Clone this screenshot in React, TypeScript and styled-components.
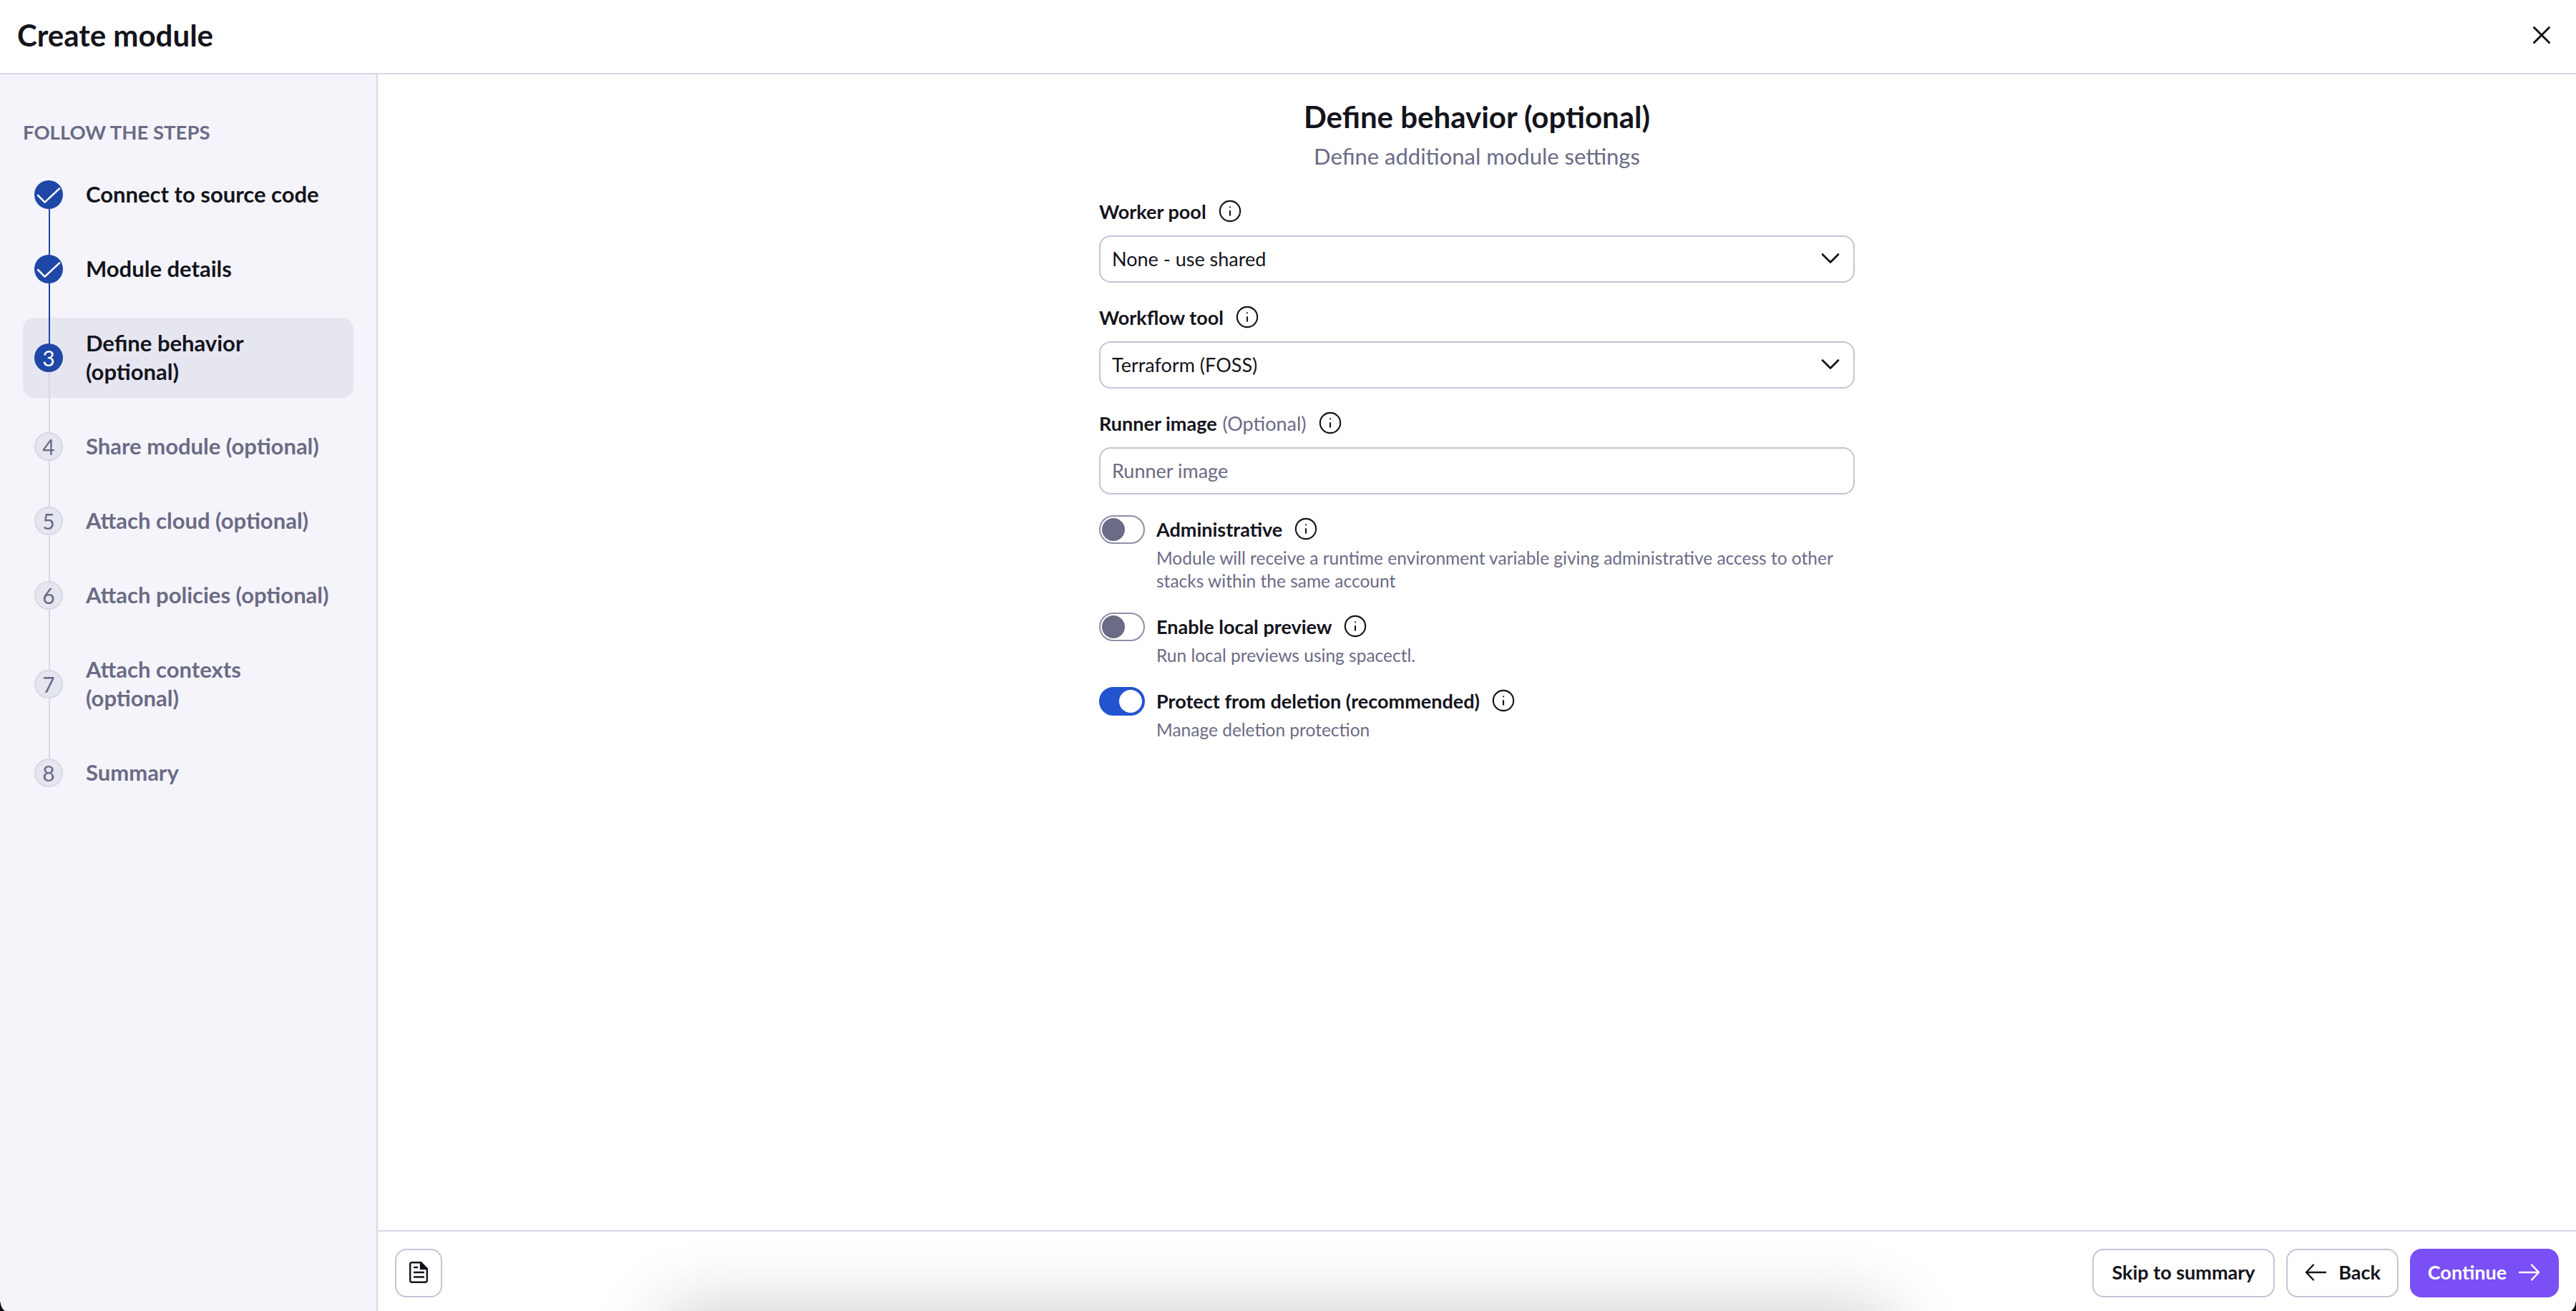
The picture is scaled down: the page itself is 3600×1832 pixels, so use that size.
import { createGlobalStyle, styled } from 'styled-components';
import { Info, ChevronDown, X } from 'lucide-react';

const GlobalStyle = createGlobalStyle`
  html, body {
    margin: 0;
    padding: 0;
    background: #0c0c0c;
    font-family: "Lato", "Noto Sans", sans-serif;
    color: #14141c;
  }
  * { box-sizing: border-box; }
`;

const Window = styled.div`
  position: relative;
  width: 3600px;
  height: 1832px;
  display: flex;
  flex-direction: column;
  background: #fff;
  border-radius: 0 0 9px 9px / 0 0 19px 19px;
  overflow: hidden;
`;

const Header = styled.header`
  height: 104px;
  flex: none;
  display: flex;
  align-items: center;
  justify-content: space-between;
  padding: 0 27px 4px 24px;
  border-bottom: 2px solid #d8d8e6;
`;

const PageTitle = styled.h1`
  margin: 0;
  font-size: 42px;
  line-height: 48px;
  font-weight: 700;
`;

const Body = styled.div`
  flex: 1;
  display: flex;
  min-height: 0;
`;

const Sidebar = styled.aside`
  width: 528px;
  flex: none;
  padding: 63px 32px 0;
  background: #f4f4fa;
  border-right: 2px solid #d8d8e6;
`;

const SidebarTitle = styled.div`
  font-size: 27.5px;
  line-height: 36px;
  font-weight: 700;
  color: #6b6b85;
  margin-bottom: 33px;
`;

const Steps = styled.div`
  display: flex;
  flex-direction: column;
  gap: 32px;
`;

const Step = styled.div<{ $active?: boolean; $line?: string }>`
  position: relative;
  display: flex;
  align-items: center;
  gap: 32px;
  min-height: 72px;
  padding: 16px 0 16px 16px;
  border-radius: 16px;
  background: ${(p) => (p.$active ? '#e6e6f0' : 'transparent')};

  &::after {
    content: ${(p) => (p.$line ? "''" : 'none')};
    position: absolute;
    z-index: 1;
    left: 36px;
    top: calc(50% + 20px);
    height: 90px;
    width: 2px;
    background: ${(p) => p.$line};
  }
`;

const Bullet = styled.div<{ $on: boolean }>`
  position: relative;
  z-index: 2;
  width: 40px;
  height: 40px;
  flex: none;
  display: flex;
  align-items: center;
  justify-content: center;
  border-radius: 50%;
  font-size: 30px;
  background: ${(p) => (p.$on ? '#1e47a8' : '#e6e6f0')};
  border: ${(p) => (p.$on ? 'none' : '2px solid #d8d8e6')};
  color: ${(p) => (p.$on ? '#fff' : '#6b6b85')};
`;

const StepLabel = styled.div<{ $on: boolean }>`
  max-width: 346px;
  margin: -1px 0 1px;
  font-size: 31px;
  line-height: 40px;
  font-weight: 700;
  color: ${(p) => (p.$on ? '#14141c' : '#6b6b85')};
`;

const Main = styled.main`
  flex: 1;
  display: flex;
  flex-direction: column;
  min-width: 0;
`;

const Content = styled.div`
  flex: 1;
  padding-top: 35px;
  display: flex;
  flex-direction: column;
  align-items: center;
`;

const Heading = styled.h2`
  margin: 0;
  font-size: 42px;
  line-height: 48px;
  font-weight: 700;
`;

const Sub = styled.div`
  margin-top: 11px;
  font-size: 31px;
  line-height: 40px;
  color: #6b6b85;
`;

const Form = styled.div`
  width: 1056px;
  margin-top: 39px;
  display: flex;
  flex-direction: column;
`;

const Field = styled.div`
  display: flex;
  flex-direction: column;
  gap: 16px;
  margin-bottom: 30px;
`;

const Label = styled.div`
  display: flex;
  align-items: center;
  gap: 16px;
  height: 36px;
  font-size: 27px;
  font-weight: 700;
`;

const Optional = styled.span`
  font-weight: 400;
  color: #6b6b85;
  margin-left: 8px;
`;

const Control = styled.div<{ $muted?: boolean }>`
  height: 66px;
  display: flex;
  align-items: center;
  justify-content: space-between;
  padding: 0 10px 2px 16px;
  border: 2px solid #c4c4d6;
  border-radius: 16px;
  font-size: 27px;
  color: ${(p) => (p.$muted ? '#6b6b85' : '#14141c')};
`;

const ToggleList = styled.div`
  margin-top: -1px;
`;

const ToggleRow = styled.div`
  display: flex;
  gap: 16px;
  margin-bottom: 27px;
`;

const Track = styled.div<{ $on: boolean }>`
  width: 64px;
  height: 40px;
  flex: none;
  display: flex;
  align-items: center;
  justify-content: ${(p) => (p.$on ? 'flex-end' : 'flex-start')};
  padding: 0 2px;
  border-radius: 20px;
  background: ${(p) => (p.$on ? '#2353cf' : '#fff')};
  border: 2px solid ${(p) => (p.$on ? '#2353cf' : '#8e8ea6')};
`;

const Knob = styled.div<{ $on: boolean }>`
  width: 32px;
  height: 32px;
  border-radius: 50%;
  background: ${(p) => (p.$on ? '#fff' : '#6b6b85')};
`;

const ToggleText = styled.div`
  display: flex;
  flex-direction: column;
  min-width: 0;
`;

const ToggleLabel = styled(Label)`
  height: 40px;
  padding-bottom: 2px;
`;

const Desc = styled.div`
  font-size: 24.5px;
  line-height: 32px;
  margin-top: 4px;
  margin-bottom: 1px;
  color: #6b6b85;
`;

const Footer = styled.footer`
  height: 113px;
  flex: none;
  display: flex;
  align-items: flex-start;
  justify-content: space-between;
  padding: 24px 24px 0;
  border-top: 2px solid #d8d8e6;
  background: #fff;
`;

const Actions = styled.div`
  display: flex;
  gap: 16px;
`;

const Button = styled.button<{ $primary?: boolean; $width: number }>`
  width: ${(p) => p.$width}px;
  height: 68px;
  display: flex;
  align-items: center;
  justify-content: center;
  gap: 16px;
  padding: 0 0 3px;
  border-radius: 16px;
  border: 2px solid ${(p) => (p.$primary ? '#7a4ff5' : '#c4c4d6')};
  background: ${(p) => (p.$primary ? '#7a4ff5' : '#fff')};
  color: ${(p) => (p.$primary ? '#fff' : '#14141c')};
  font-family: inherit;
  font-size: 27px;
  font-weight: 700;
`;

// soft shadow of something sitting below the fold
const BottomShade = styled.div`
  position: absolute;
  left: 930px;
  right: 960px;
  bottom: -100px;
  height: 100px;
  box-shadow: 0 0 100px rgba(0, 0, 0, 0.22);
`;

const TipIcon = () => <Info size={34} strokeWidth={1.5} color="#14141c" />;

const Tick = () => (
  <svg width="40" height="40" viewBox="0 0 40 40" fill="none" stroke="#fff" strokeWidth="2.5" strokeLinecap="round" strokeLinejoin="round">
    <path d="M5 21l9.6 9.6L35 11.5" />
  </svg>
);

const LeftArrow = () => (
  <svg width="32" height="32" viewBox="0 0 32 32" fill="none" stroke="currentColor" strokeWidth="2.4" strokeLinecap="round" strokeLinejoin="round">
    <path d="M3 16h27M13 5.5L3 16l10 10.5" />
  </svg>
);

const RightArrow = () => (
  <svg width="32" height="32" viewBox="0 0 32 32" fill="none" stroke="currentColor" strokeWidth="2.4" strokeLinecap="round" strokeLinejoin="round">
    <path d="M2 16h27M19 5.5L29 16 19 26.5" />
  </svg>
);

const DocIcon = () => (
  <svg width="26" height="30" viewBox="0 0 26 30" fill="none" stroke="#14141c" strokeWidth="2.4" strokeLinejoin="round">
    <path d="M3.5 1.2H16L24.8 10v16.5a2.3 2.3 0 0 1-2.3 2.3h-19a2.3 2.3 0 0 1-2.3-2.3v-23a2.3 2.3 0 0 1 2.3-2.3z" />
    <path d="M16 1.2V10h8.8z" fill="#14141c" />
    <path d="M6 8h6M6 15h15M6 21.5h15" />
  </svg>
);

const stepList = [
  { label: 'Connect to source code', done: true, line: '#1e47a8' },
  { label: 'Module details', done: true, line: '#1e47a8' },
  { label: 'Define behavior (optional)', active: true, line: '#d8d8e6' },
  { label: 'Share module (optional)', line: '#d8d8e6' },
  { label: 'Attach cloud (optional)', line: '#d8d8e6' },
  { label: 'Attach policies (optional)', line: '#d8d8e6' },
  { label: 'Attach contexts (optional)', line: '#d8d8e6' },
  { label: 'Summary' },
];

const toggles = [
  {
    label: 'Administrative',
    desc: 'Module will receive a runtime environment variable giving administrative access to other stacks within the same account',
    on: false,
  },
  { label: 'Enable local preview', desc: 'Run local previews using spacectl.', on: false },
  { label: 'Protect from deletion (recommended)', desc: 'Manage deletion protection', on: true },
];

const App = () => {
  return (
    <Window>
      <GlobalStyle />
      <Header>
        <PageTitle>Create module</PageTitle>
        <X size={42} strokeWidth={1.7} color="#14141c" />
      </Header>
      <Body>
        <Sidebar>
          <SidebarTitle>FOLLOW THE STEPS</SidebarTitle>
          <Steps>
            {stepList.map((step, i) => {
              const on = !!(step.done || step.active);
              return (
                <Step key={step.label} $active={step.active} $line={step.line}>
                  <Bullet $on={on}>{step.done ? <Tick /> : i + 1}</Bullet>
                  <StepLabel $on={on}>{step.label}</StepLabel>
                </Step>
              );
            })}
          </Steps>
        </Sidebar>
        <Main>
          <Content>
            <Heading>Define behavior (optional)</Heading>
            <Sub>Define additional module settings</Sub>
            <Form>
              <Field>
                <Label>Worker pool <TipIcon /></Label>
                <Control>None - use shared <ChevronDown size={44} strokeWidth={1.5} /></Control>
              </Field>
              <Field>
                <Label>Workflow tool <TipIcon /></Label>
                <Control>Terraform (FOSS) <ChevronDown size={44} strokeWidth={1.5} /></Control>
              </Field>
              <Field>
                <Label><span>Runner image<Optional>(Optional)</Optional></span> <TipIcon /></Label>
                <Control $muted>Runner image</Control>
              </Field>
              <ToggleList>
                {toggles.map((t) => (
                  <ToggleRow key={t.label}>
                    <Track $on={t.on}><Knob $on={t.on} /></Track>
                    <ToggleText>
                      <ToggleLabel>{t.label} <TipIcon /></ToggleLabel>
                      <Desc>{t.desc}</Desc>
                    </ToggleText>
                  </ToggleRow>
                ))}
              </ToggleList>
            </Form>
          </Content>
          <Footer>
            <Button $width={66}><DocIcon /></Button>
            <Actions>
              <Button $width={255}>Skip to summary</Button>
              <Button $width={157}><LeftArrow /> Back</Button>
              <Button $primary $width={208}>Continue <RightArrow /></Button>
            </Actions>
          </Footer>
        </Main>
      </Body>
      <BottomShade />
    </Window>
  );
};

export default App;
